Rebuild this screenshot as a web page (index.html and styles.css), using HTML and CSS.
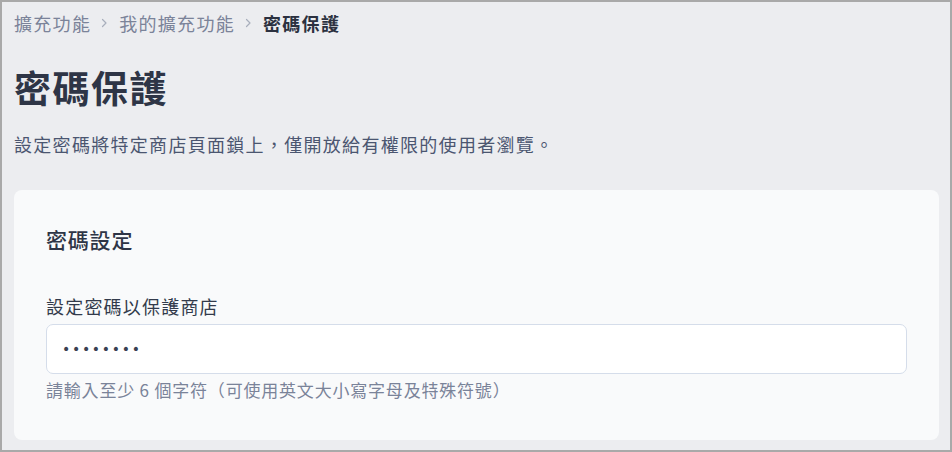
FILE: index.html
```html
<!DOCTYPE html>
<html lang="zh-Hant">
<head>
<meta charset="utf-8">
<title>密碼保護</title>
<link rel="stylesheet" href="styles.css">
</head>
<body>
<div class="frame">
  <nav class="crumbs">
    <a class="crumb" href="#">擴充功能</a>
    <span class="sep"><svg width="8" height="10" viewBox="0 0 8 10"><path d="M2.5 1.5 L6 5 L2.5 8.5" fill="none" stroke="currentColor" stroke-width="1.2" stroke-linecap="round" stroke-linejoin="round"/></svg></span>
    <a class="crumb" href="#">我的擴充功能</a>
    <span class="sep"><svg width="8" height="10" viewBox="0 0 8 10"><path d="M2.5 1.5 L6 5 L2.5 8.5" fill="none" stroke="currentColor" stroke-width="1.2" stroke-linecap="round" stroke-linejoin="round"/></svg></span>
    <span class="crumb current">密碼保護</span>
  </nav>

  <h1 class="title">密碼保護</h1>
  <p class="lead">設定密碼將特定商店頁面鎖上，僅開放給有權限的使用者瀏覽。</p>

  <section class="card">
    <h2 class="card-title">密碼設定</h2>
    <label class="field-label" for="pw">設定密碼以保護商店</label>
    <input class="field-input" id="pw" type="password" value="12345678">
    <p class="hint">請輸入至少 6 個字符（可使用英文大小寫字母及特殊符號）</p>
  </section>
</div>
</body>
</html>
```

FILE: styles.css
```css
* { box-sizing: border-box; }

html, body {
  margin: 0;
  padding: 0;
}

body {
  font-family: "Noto Sans CJK TC", "Noto Sans", sans-serif;
  background: #a9a9a9;
}

.frame {
  width: 952px;
  height: 452px;
  border: 2px solid #a9a9a9;
  background: #ecedf0;
  padding: 0 11px 0 12px;
  overflow: hidden;
}

.crumbs {
  display: flex;
  align-items: center;
  height: 42px;
  font-size: 18px;
  letter-spacing: 1.3px;
}

.crumb {
  color: #7b8399;
  text-decoration: none;
}

.crumb.current {
  color: #2b3140;
  font-weight: 700;
}

.sep {
  display: flex;
  align-items: center;
  color: #a8aebc;
  margin: 0 11px 0 9px;
}

.title {
  margin: 19px 0 0;
  font-size: 37px;
  line-height: 48px;
  font-weight: 700;
  letter-spacing: 1.5px;
  color: #2e3546;
}

.lead {
  margin: 20px 0 0;
  font-size: 18px;
  line-height: 26px;
  letter-spacing: 1.3px;
  color: #4b5670;
}

.card {
  margin-top: 33px;
  background: #f9fafb;
  border-radius: 8px;
  padding: 27px 32px 39px;
}

.card-title {
  margin: 0;
  font-size: 21px;
  line-height: 44px;
  font-weight: 500;
  letter-spacing: 0.8px;
  color: #2e3546;
}

.field-label {
  display: block;
  margin-top: 32px;
  font-size: 18px;
  line-height: 26px;
  letter-spacing: 1.2px;
  color: #323a4b;
}

.field-input {
  display: block;
  width: 100%;
  height: 50px;
  margin-top: 5px;
  padding: 0 15px;
  border: 1px solid #d5ddea;
  border-radius: 7px;
  background: #ffffff;
  font-family: "DejaVu Sans", sans-serif;
  font-size: 14px;
  letter-spacing: 1.7px;
  color: #3a4152;
  outline: none;
}

.hint {
  margin: 5px 0 0;
  font-size: 17px;
  line-height: 22px;
  letter-spacing: 0.8px;
  color: #7a8399;
}
```
